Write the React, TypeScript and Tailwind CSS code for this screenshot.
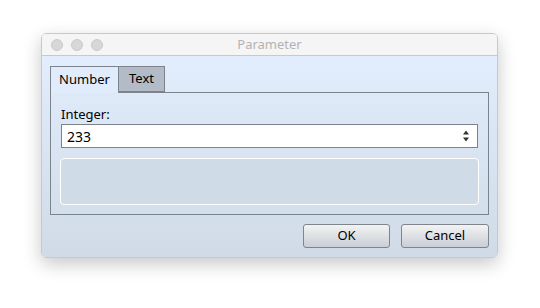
import React from "react";

export default function App() {
  return (
    <div className="w-[540px] h-[308px] bg-white relative" style={{ fontFamily: '"Noto Sans", "Liberation Sans", Arial, sans-serif' }}>
      <div className="absolute left-[41px] top-[33px] w-[457px] h-[225px] rounded-[5px] overflow-hidden border border-[#c9c9c9] shadow-[0_6px_18px_rgba(0,0,0,0.22)] flex flex-col">
        <div className="h-[22px] bg-[#f5f5f5] border-b border-[#c9c9c9] flex items-center relative shrink-0">
          <div className="flex gap-[8px] pl-[9px]">
            <div className="w-[12px] h-[12px] rounded-full bg-[#d7d7d7] border border-[#cbcbcb]" />
            <div className="w-[12px] h-[12px] rounded-full bg-[#d7d7d7] border border-[#cbcbcb]" />
            <div className="w-[12px] h-[12px] rounded-full bg-[#d7d7d7] border border-[#cbcbcb]" />
          </div>
          <div className="absolute inset-0 flex items-center justify-center text-[13px] text-[#b3b3b3]">Parameter</div>
        </div>
        <div className="flex-1 bg-gradient-to-b from-[#e2edfd] to-[#d0dbe7] px-[8px] pt-[9px] flex flex-col">
          <div className="flex items-end h-[27px]">
            <div className="h-[27px] w-[69px] border border-b-0 border-[#7b838d] bg-[#e0ebfb] flex items-center justify-center text-[13px] text-black relative top-[1px] z-10">Number</div>
            <div className="h-[26px] w-[46px] border border-l-0 border-[#7b838d] bg-[#b2bbc6] flex items-center justify-center text-[13px] text-black">Text</div>
          </div>
          <div className="h-[123px] border border-[#7b838d] px-[10px] pt-[13px] flex flex-col">
            <div className="text-[13px] text-black leading-[16px] h-[16px]">Integer:</div>
            <div className="mt-[2px] h-[24px] bg-white border border-[#7b838d] flex items-center justify-between pl-[5px] pr-[7px]">
              <span className="text-[14px] text-black">233</span>
              <svg width="8" height="16" viewBox="0 0 8 16">
                <path d="M4 2.5 L7 6.5 L1 6.5 Z" fill="#333" />
                <path d="M4 13.5 L7 9.5 L1 9.5 Z" fill="#333" />
              </svg>
            </div>
            <div className="mt-[10px] mx-[-1px] h-[47px] rounded-[4px] border border-white bg-[#cfdbe6]" />
          </div>
          <div className="flex justify-end gap-[11px] mt-[9px]">
            <button className="w-[87px] h-[24px] rounded-[3px] border border-[#7f858d] bg-gradient-to-b from-[#f3f3f3] to-[#c9ced6] text-[13px] text-black">OK</button>
            <button className="w-[88px] h-[24px] rounded-[3px] border border-[#7f858d] bg-gradient-to-b from-[#f3f3f3] to-[#c9ced6] text-[13px] text-black">Cancel</button>
          </div>
        </div>
      </div>
    </div>
  );
}
